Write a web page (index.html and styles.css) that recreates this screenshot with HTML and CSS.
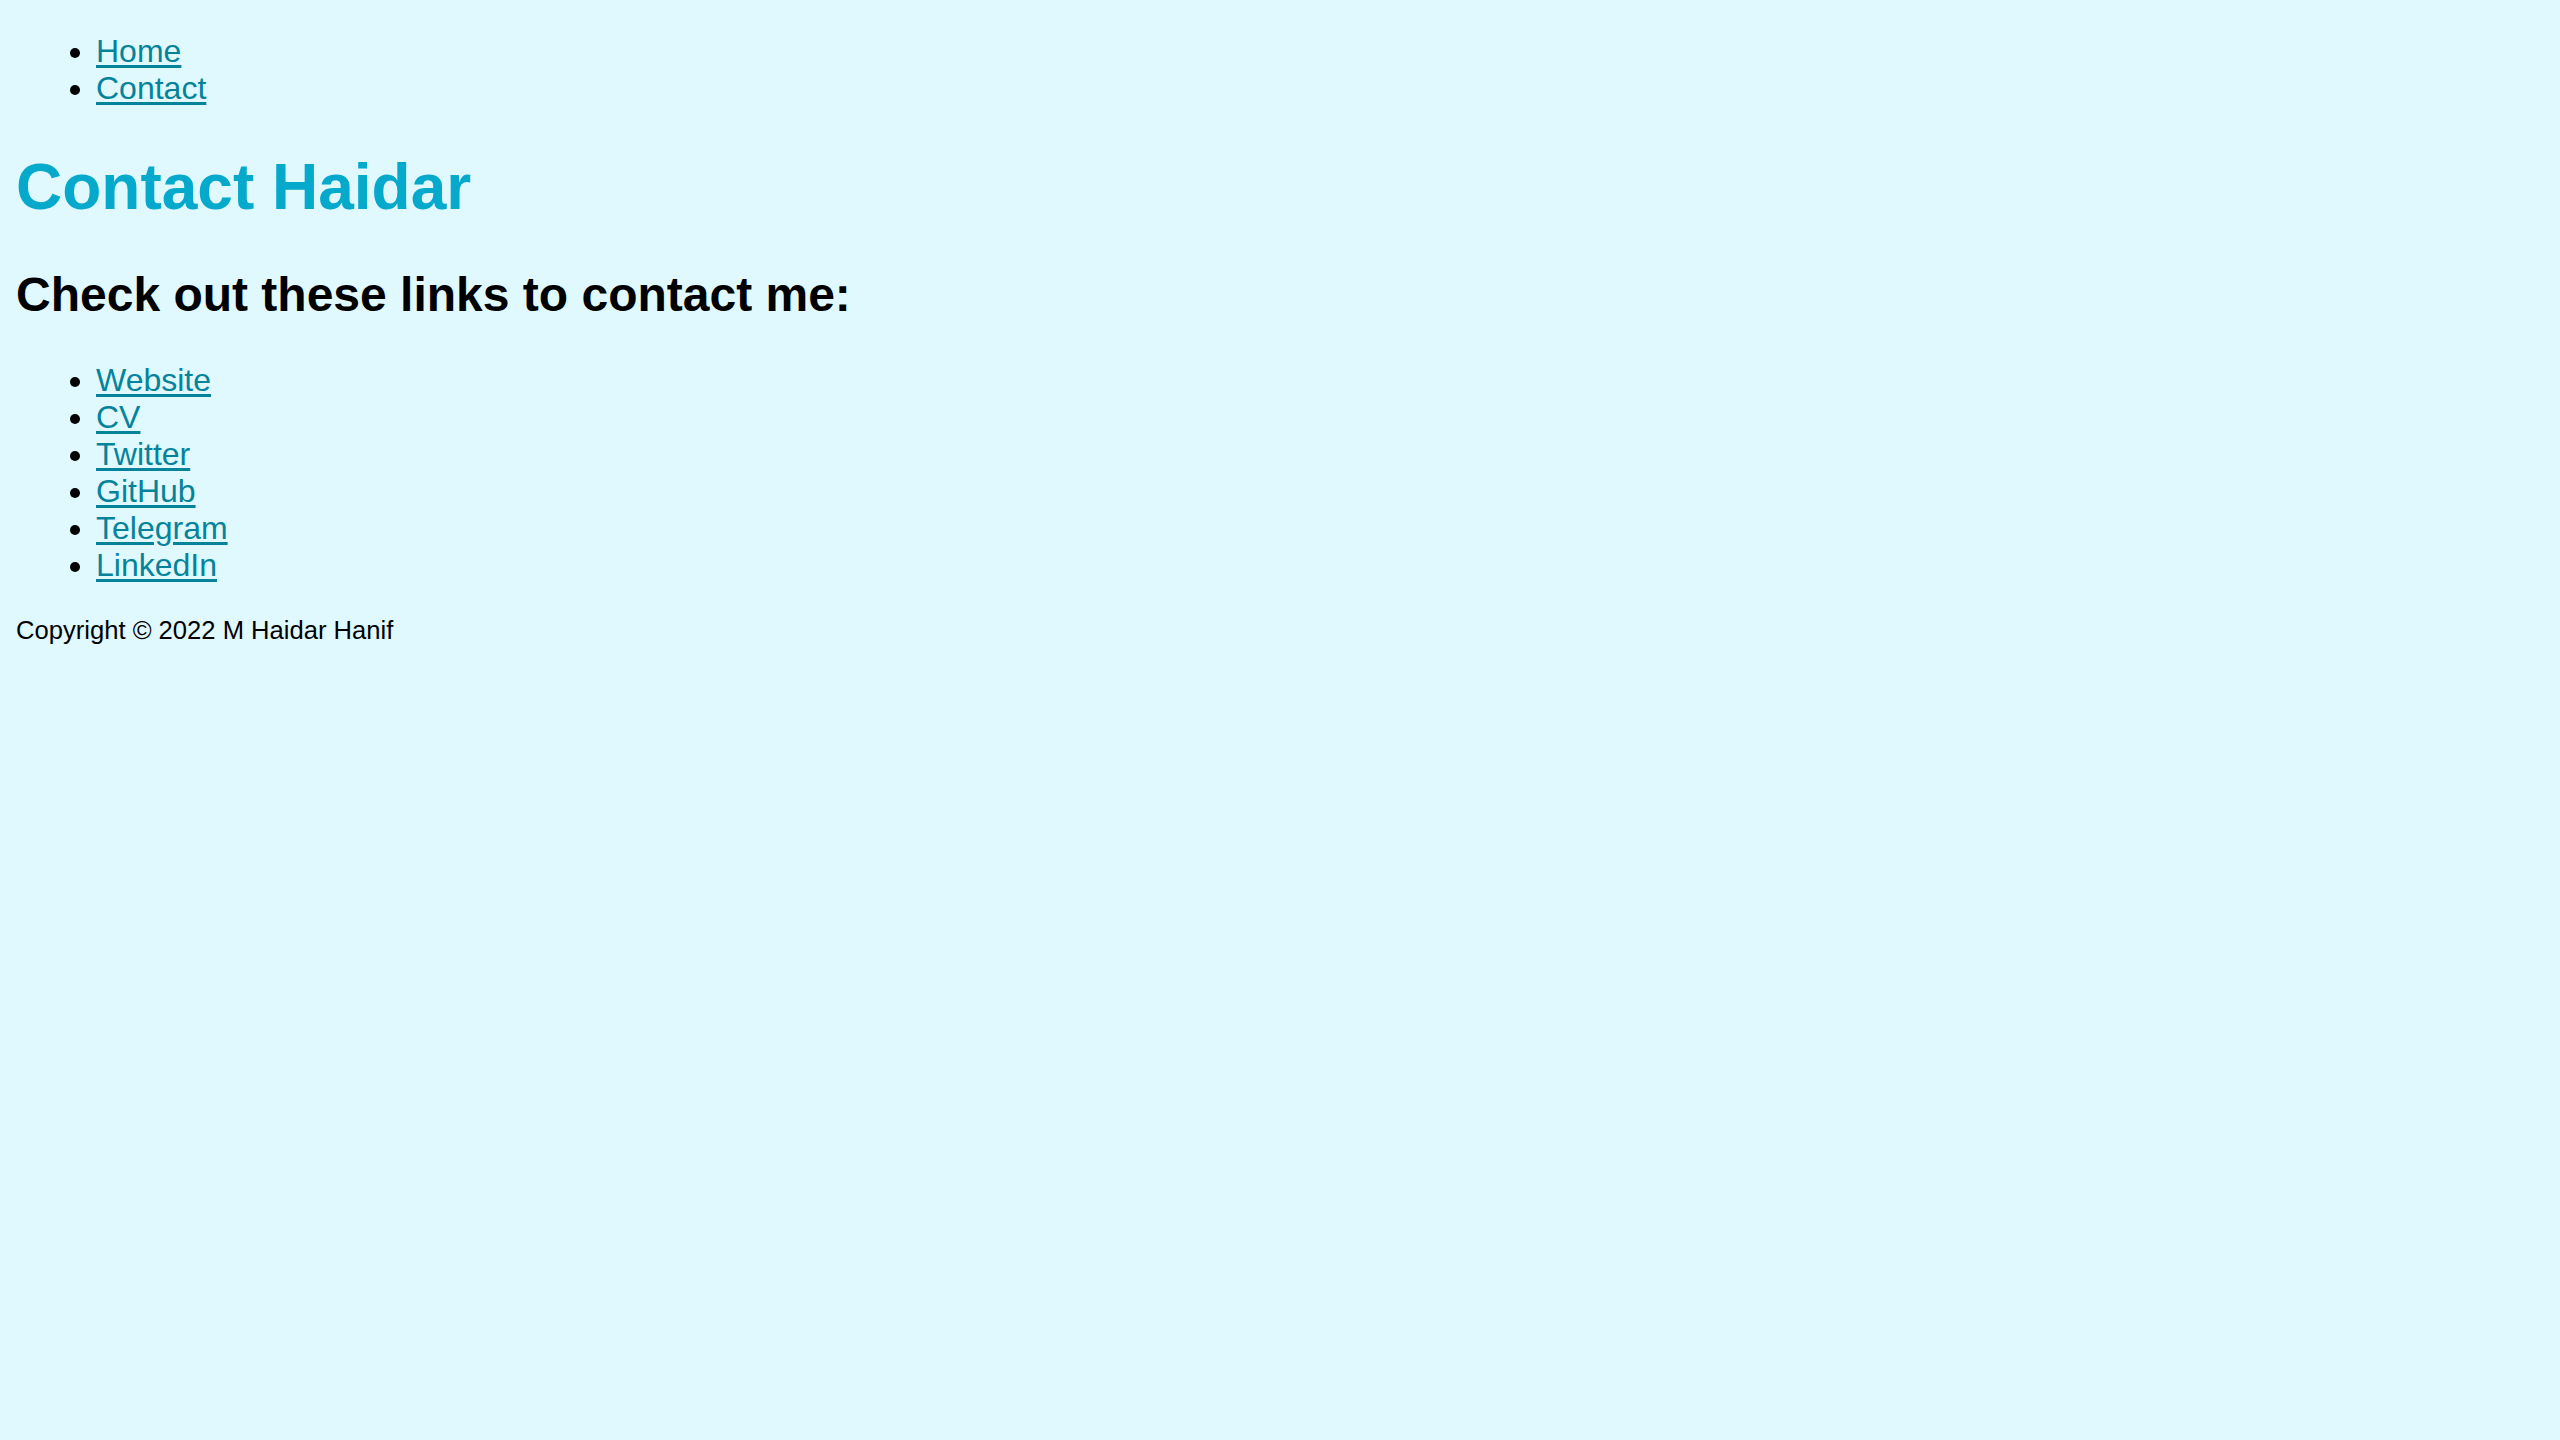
FILE: index.html
```html
<!DOCTYPE html>
<html lang="en">
<head>
<meta charset="utf-8">
<title>Contact Haidar</title>
<link rel="stylesheet" href="styles.css">
</head>
<body>
<nav>
  <ul class="list nav-list">
    <li><a href="#">Home</a></li>
    <li><a href="#">Contact</a></li>
  </ul>
</nav>
<main>
  <h1 class="title">Contact Haidar</h1>
  <h2 class="subtitle">Check out these links to contact me:</h2>
  <ul class="list">
    <li><a href="#">Website</a></li>
    <li><a href="#">CV</a></li>
    <li><a href="#">Twitter</a></li>
    <li><a href="#">GitHub</a></li>
    <li><a href="#">Telegram</a></li>
    <li><a href="#">LinkedIn</a></li>
  </ul>
</main>
<footer>
  <p class="copyright">Copyright © 2022 M Haidar Hanif</p>
</footer>
</body>
</html>
```

FILE: styles.css
```css
html {
  background: #e0f9ff;
}
body {
  margin: 16px;
  font-family: "Liberation Sans", Arial, Helvetica, sans-serif;
  font-size: 32px;
  color: #000;
  background: #e0f9ff;
}
.list {
  margin: 32px 0;
  padding-left: 80px;
}
.nav-list {
  margin-top: 17px;
  margin-bottom: 31px;
}
.list a {
  color: #05839b;
  text-decoration: underline;
  text-decoration-thickness: 3px;
  text-underline-offset: 3px;
}
.title {
  font-size: 64px;
  margin: 43px 0;
  color: #04a9cc;
}
.subtitle {
  font-size: 48px;
  margin: 40px 0;
}
.copyright {
  font-size: 25.6px;
  margin: 26px 0;
}
```
